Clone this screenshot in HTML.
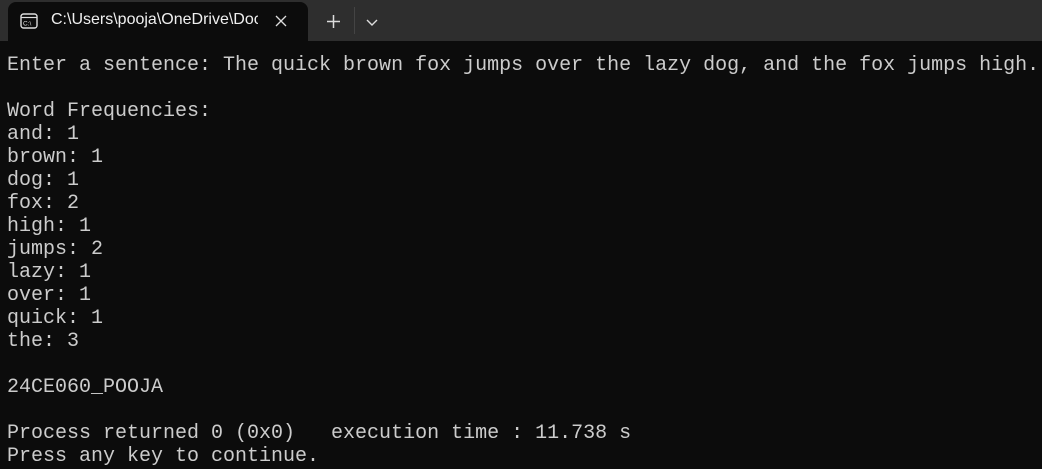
<!DOCTYPE html>
<html><head><style>
html,body{margin:0;padding:0;width:1042px;height:469px;overflow:hidden;background:#0c0c0c;}
.bar{position:absolute;left:0;top:0;width:1042px;height:41px;background:#2e2e2e;}
.tab{position:absolute;left:8px;top:2px;width:300px;height:39px;background:#0c0c0c;border-radius:8px 8px 0 0;}
.title{position:absolute;left:51px;top:11px;font:16px "Liberation Sans",sans-serif;color:#f0f0f0;white-space:nowrap;width:207px;overflow:hidden;}
pre{position:absolute;left:7px;top:54px;margin:0;font:20px/23px "Liberation Mono",monospace;color:#cccccc;}
</style></head><body>
<div class="bar"></div>
<div class="tab"></div>
<svg style="position:absolute;left:20px;top:13px" width="18" height="16" viewBox="0 0 18 16"><rect x="1" y="1" width="16" height="14" rx="2.5" fill="none" stroke="#ddd" stroke-width="1.4"/><line x1="1" y1="4.5" x2="17" y2="4.5" stroke="#ddd" stroke-width="1.2"/><text x="3" y="12.5" font-family="Liberation Sans" font-size="6.5" fill="#ddd">C:\</text></svg>
<div class="title">C:\Users\pooja\OneDrive\Doc</div>
<svg style="position:absolute;left:275px;top:15px" width="12" height="12"><path d="M1 1L11 11M11 1L1 11" stroke="#ddd" stroke-width="1.3"/></svg>
<svg style="position:absolute;left:327px;top:15px" width="13" height="13"><path d="M6.5 0V13M0 6.5H13" stroke="#ddd" stroke-width="1.5"/></svg>
<div style="position:absolute;left:354px;top:7px;width:1px;height:27px;background:#444"></div>
<svg style="position:absolute;left:366px;top:19px" width="12" height="7"><path d="M1 1L6 6L11 1" stroke="#ddd" stroke-width="1.4" fill="none"/></svg>
<pre>Enter a sentence: The quick brown fox jumps over the lazy dog, and the fox jumps high.

Word Frequencies:
and: 1
brown: 1
dog: 1
fox: 2
high: 1
jumps: 2
lazy: 1
over: 1
quick: 1
the: 3

24CE060_POOJA

Process returned 0 (0x0)   execution time : 11.738 s
Press any key to continue.</pre>
</body></html>
